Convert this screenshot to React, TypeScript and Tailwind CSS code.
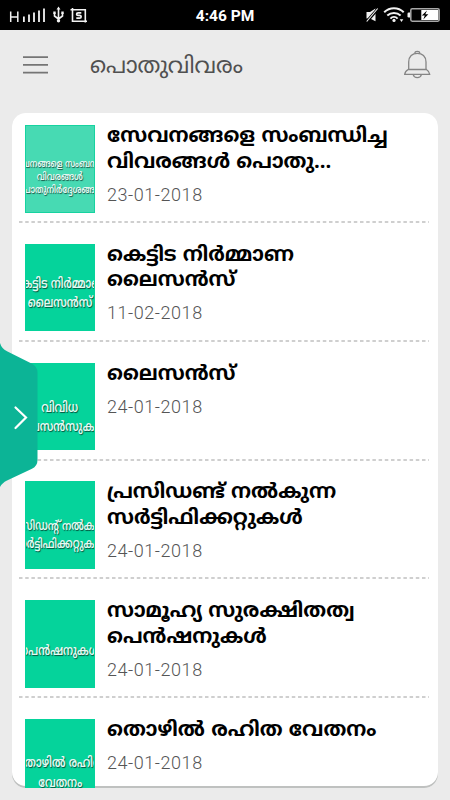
import clsx from 'clsx';

interface NoticeItem {
  title: string[];
  date: string;
  thumb: string[];
  thumbClass: string;
  faded?: boolean;
}

const notices: NoticeItem[] = [
  {
    title: ['സേവനങ്ങളെ സംബന്ധിച്ച', 'വിവരങ്ങൾ പൊതു...'],
    date: '23-01-2018',
    thumb: ['സേവനങ്ങളെ സംബന്ധിച്ച', 'വിവരങ്ങൾ', 'പൊതുനിർദ്ദേശങ്ങൾ'],
    thumbClass: 'pt-[31.5px] text-[10.5px] leading-[13.3px]',
    faded: true,
  },
  {
    title: ['കെട്ടിട നിർമ്മാണ', 'ലൈസൻസ്'],
    date: '11-02-2018',
    thumb: ['കെട്ടിട നിർമ്മാണ', 'ലൈസൻസ്'],
    thumbClass: 'pt-[30px] text-[14px] leading-[19.5px]',
  },
  {
    title: ['ലൈസൻസ്'],
    date: '24-01-2018',
    thumb: ['വിവിധ', 'ലൈസൻസുകൾ'],
    thumbClass: 'pt-[35px] text-[14px] leading-[19.5px]',
  },
  {
    title: ['പ്രസിഡണ്ട് നൽകുന്ന', 'സർട്ടിഫിക്കറ്റുകൾ'],
    date: '24-01-2018',
    thumb: ['പ്രസിഡന്റ് നൽകുന്ന', 'സർട്ടിഫിക്കറ്റുകൾ'],
    thumbClass: 'pt-[35.5px] text-[13px] leading-[18px]',
  },
  {
    title: ['സാമൂഹ്യ സുരക്ഷിതത്വ', 'പെൻഷനുകൾ'],
    date: '24-01-2018',
    thumb: ['പെൻഷനുകൾ'],
    thumbClass: 'pt-[41px] text-[14px] leading-[19.5px]',
  },
  {
    title: ['തൊഴിൽ രഹിത വേതനം'],
    date: '24-01-2018',
    thumb: ['തൊഴിൽ രഹിത', 'വേതനം'],
    thumbClass: 'pt-[34px] text-[14px] leading-[20px]',
  },
];

function StatusBar() {
  return (
    <div className="grid h-[30px] shrink-0 grid-cols-3 items-center bg-black text-white">
      <div className="flex items-center">
        <svg width="90" height="30" viewBox="0 0 90 30" fill="none" stroke="#f2f2f2">
          <path d="M10.7 11.5v10.5M17.8 11.5v10.5M10.7 17h7" strokeWidth="1.5" />
          <path d="M23.9 16.5V22M29 14.500V22M34 12.500V22M39 10.500V22M44 8.500V22" strokeWidth="1.8" />
          <path d="M58.5 9v12M54.5 13v3l4 3M62.5 13v3l-4 3" strokeWidth="1.6" />
          <path d="M58.5 6.5l2 3h-4zM53.3 11.5h2.4v2.4h-2.4zM61.3 11.5h2.4v2.4h-2.4z" fill="#f2f2f2" stroke="none" />
          <circle cx="58.5" cy="20.8" r="1.7" fill="#f2f2f2" stroke="none" />
          <path d="M70.5 9.7h14.8v12.8M72.5 8v13.3h14.5" strokeWidth="1.6" />
          <path d="M81.3 12.9h-3.2c-2 0-2 2.5 0 2.5h1.4c2.2 0 2.2 2.7 0 2.7h-3.2" strokeWidth="1.7" />
        </svg>
      </div>
      <span className="pt-[3px] text-center font-['Roboto'] text-[15.5px] leading-none font-bold">4:46 PM</span>
      <div className="flex justify-end">
        <svg width="90" height="30" viewBox="360 0 90 30" fill="none">
          <path d="M366.5 12h3.5l5.500-3.500v12.800L370 18.500h-3.500z" fill="#f2f2f2" />
          <path d="M378.4 8.2l-12 13.8" stroke="#000" strokeWidth="3" />
          <path d="M377.7 8.5l-11 13" stroke="#f2f2f2" strokeWidth="1.1" />
          <path d="M384.2 12.3c5.5-5.3 14-5.3 19.5 0M387.3 15.5c3.8-3.5 9.5-3.5 13.3 0M390.4 18.6c2-2 5.2-2 7.2 0" stroke="#f2f2f2" strokeWidth="2" />
          <circle cx="394" cy="20.4" r="1.6" fill="#f2f2f2" />
          <path d="M399.7 19.3h3.6l-1.8 2.6z" fill="#f2f2f2" />
          <path d="M410 12.5h-1.2q-1.3 0-1.3 1.2v2.6q0 1.2 1.3 1.2h1.2z" fill="#f2f2f2" />
          <rect x="410.8" y="8.8" width="28.4" height="12.4" rx="1.4" stroke="#a8a8a8" strokeWidth="1.5" />
          <rect x="421.3" y="10" width="17" height="10" fill="#fff" />
          <path d="M427 10.5l-5.2 5h3l-1.5 4 5-5.2h-3z" fill="#000" />
        </svg>
      </div>
    </div>
  );
}

function Header() {
  return (
    <header className="flex h-[82px] shrink-0 items-start pt-[20px] pr-[19px] pl-[23px]">
      <svg className="mt-[5px] shrink-0" width="25" height="20" viewBox="0 0 25 20" stroke="#757575" strokeWidth="1.8">
        <path d="M0 2.1h25M0 9.8h25M0 17.6h25" />
      </svg>
      <h1 className="mt-[3px] ml-[42px] text-[22.5px] leading-[30px] whitespace-nowrap text-[#505050]">പൊതുവിവരം</h1>
      <svg className="ml-auto shrink-0" width="28" height="29" viewBox="402 50 28 29" fill="none" stroke="#858585" strokeWidth="1.3">
        <path d="M407.7 69.5V62c0-5.5 3.7-8.7 8.6-8.7s8.7 3.2 8.7 8.7v7.5" />
        <path d="M413.8 53.3c.2-2.5 4.8-2.5 5 0" />
        <path d="M407.2 69.5h18.2q3 1.8 3.3 4.9h-25q.3-3.1 3.5-4.9z" />
        <path d="M412.2 74.6c1 4 7.2 4 8.2 0" />
      </svg>
    </header>
  );
}

function Thumbnail({ item }: { item: NoticeItem }) {
  return (
    <div
      className={clsx(
        'h-[87.5px] w-[70px] shrink-0 overflow-hidden border',
        item.faded ? 'border-[#16d3a0] bg-[#47dab3]' : 'border-[#05d39b] bg-[#05d39b]',
      )}
    >
      <div
        className={clsx(
          'flex flex-col items-center font-semibold text-[#e4faf3] [text-shadow:1px_1px_1px_rgba(0,0,0,0.6)]',
          item.thumbClass,
        )}
      >
        {item.thumb.map((line) => (
          <span key={line} className="scale-x-[0.75] whitespace-nowrap">{line}</span>
        ))}
      </div>
    </div>
  );
}

function NoticeRow({ item }: { item: NoticeItem }) {
  return (
    <li className="shrink-0">
      <div className="flex h-[87.5px] gap-[12px] pl-[13px]">
        <Thumbnail item={item} />
        <div>
          <h2 className="text-[20.2px] leading-[25.5px] font-bold text-black">
            {item.title.map((line) => (
              <span key={line} className="block whitespace-nowrap">{line}</span>
            ))}
          </h2>
          <p className="mt-[7.5px] font-['Roboto'] text-[18px] leading-[22px] font-light tracking-[0.55px] text-[#555]">
            {item.date}
          </p>
        </div>
      </div>
      <svg className="mt-[8.5px] mb-[20.75px] ml-[7px] block" width="410" height="2" stroke="#a0a0a0" strokeWidth="1.2">
        <path d="M0 1h410" strokeDasharray="3.5 2.7" />
      </svg>
    </li>
  );
}

function DrawerHandle() {
  return (
    <svg className="absolute top-[342px] left-0" width="38" height="146" viewBox="0 342 38 146" fill="none">
      <path d="M0 343q1.5 5.5 7 8.2L31.5 363.5Q37.5 366.5 37.5 372.5V460Q37.5 466 32 468.8L7 480.5Q2 483 0 487z" fill="#0cb496" />
      <path d="M15.5 407.5l10.5 10-10.5 10.5" stroke="#fff" strokeWidth="2.2" strokeLinecap="round" />
    </svg>
  );
}

export default function App() {
  return (
    <div className="relative flex h-[800px] w-[450px] flex-col overflow-hidden bg-[#ebebeb] font-['Noto_Sans_Malayalam','Noto_Sans',sans-serif]">
      <StatusBar />
      <Header />
      <main className="mx-[12px] mt-[0.5px] h-[675px] w-[425.5px] overflow-hidden rounded-[14px] bg-white pt-[12.5px] shadow-[inset_0_-2px_0_#bfc1c0]">
        <ul className="flex flex-col">
          {notices.map((item) => (
            <NoticeRow key={item.title[0]} item={item} />
          ))}
        </ul>
      </main>
      <DrawerHandle />
    </div>
  );
}
